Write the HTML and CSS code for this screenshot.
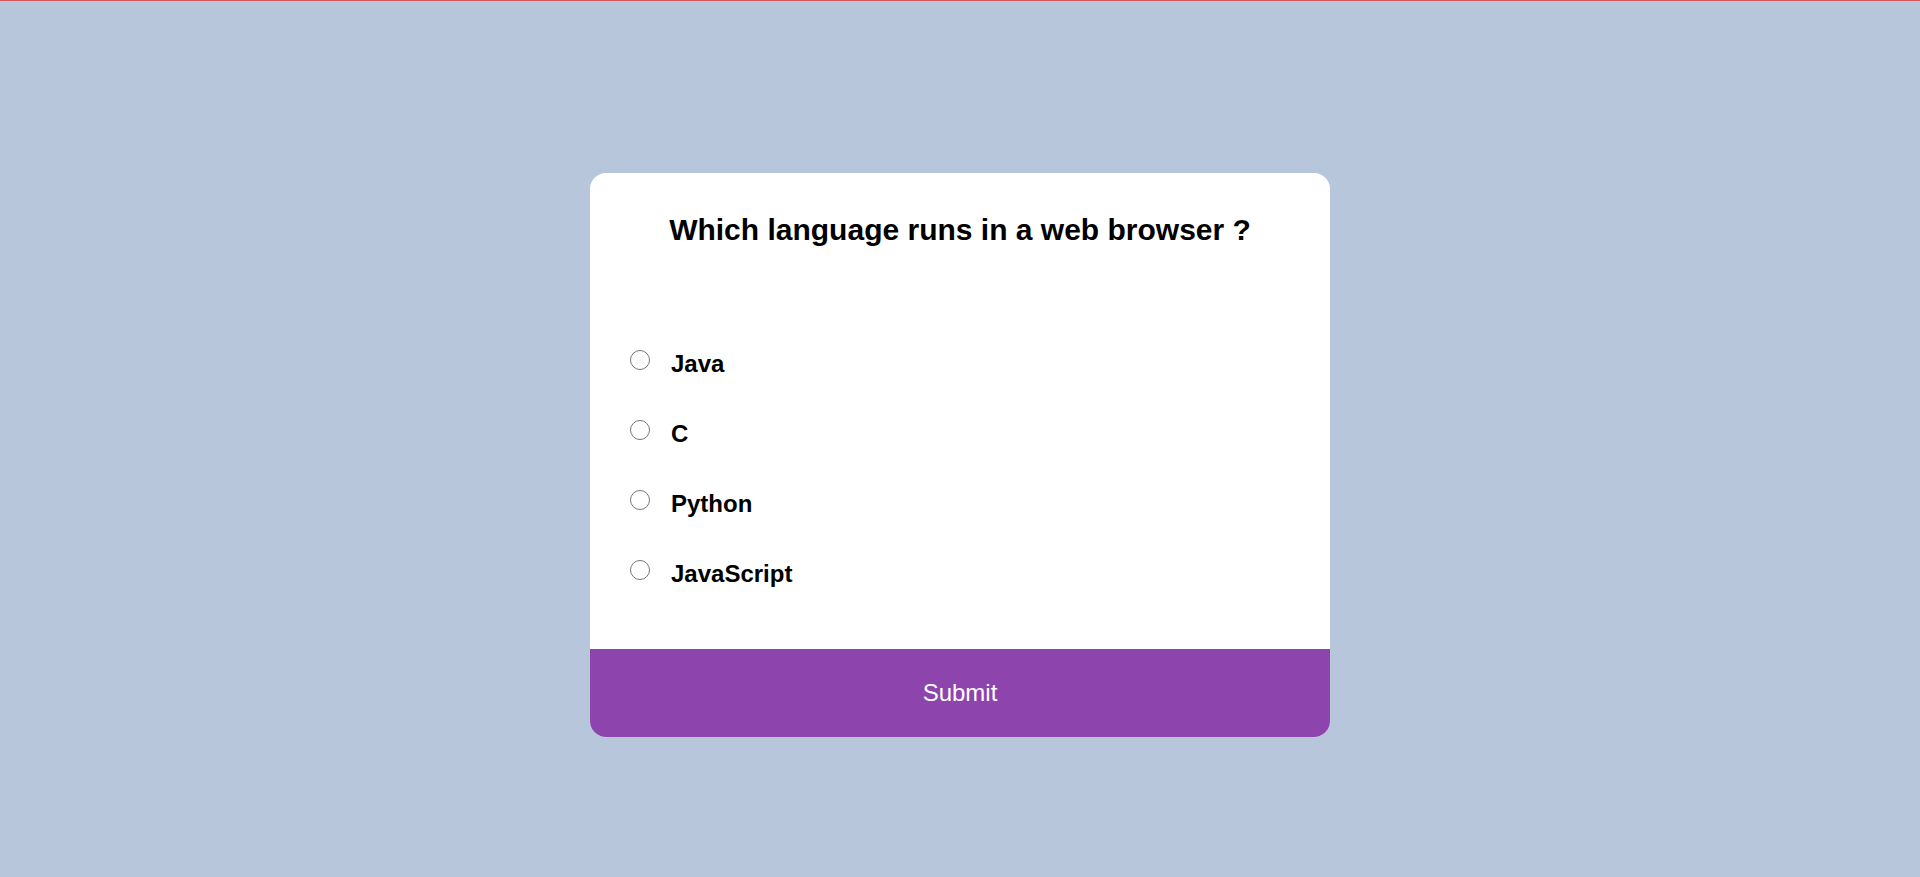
FILE: index.html
```html
<!DOCTYPE html>
<html lang="en">
<head>
<meta charset="UTF-8">
<title>Quiz</title>
<link rel="stylesheet" href="styles.css">
</head>
<body>
<div class="topline"></div>
<main class="stage">
  <div class="quiz">
    <div class="quiz-header">
      <h2 class="question">Which language runs in a web browser ?</h2>
      <ul class="answers">
        <li class="answer"><input type="radio" name="a" id="a1" class="radio"><label for="a1">Java</label></li>
        <li class="answer"><input type="radio" name="a" id="a2" class="radio"><label for="a2">C</label></li>
        <li class="answer"><input type="radio" name="a" id="a3" class="radio"><label for="a3">Python</label></li>
        <li class="answer"><input type="radio" name="a" id="a4" class="radio"><label for="a4">JavaScript</label></li>
      </ul>
    </div>
    <button class="submit">Submit</button>
  </div>
</main>
</body>
</html>
```
FILE: styles.css
```css
html, body {
  margin: 0;
  padding: 0;
}
body {
  background: #b8c6db;
  font-family: "Liberation Sans", Arial, sans-serif;
  height: 877px;
  overflow: hidden;
  display: flex;
  flex-direction: column;
}
.topline {
  height: 1px;
  background: #d0575a;
}
.stage {
  flex: 1;
  display: flex;
  justify-content: center;
  align-items: flex-start;
  padding-top: 172px;
}
.quiz {
  width: 740px;
  background: #fff;
  border-radius: 16px;
  overflow: hidden;
}
.quiz-header {
  padding: 40px 40px 61px;
}
.question {
  margin: 0;
  text-align: center;
  font-size: 30px;
  font-weight: bold;
  color: #000;
}
.answers {
  list-style: none;
  margin: 103px 0 0;
  padding: 0;
  display: flex;
  flex-direction: column;
  gap: 42px;
}
.answer {
  display: flex;
  align-items: center;
  font-size: 24px;
  font-weight: bold;
  height: 28px;
}
.radio {
  width: 20px;
  height: 20px;
  margin: 0 21px 9px 0;
}
.submit {
  display: block;
  width: 100%;
  border: none;
  background: #8e44ad;
  color: #fff;
  font-family: inherit;
  font-size: 24px;
  padding: 30px;
}
```
